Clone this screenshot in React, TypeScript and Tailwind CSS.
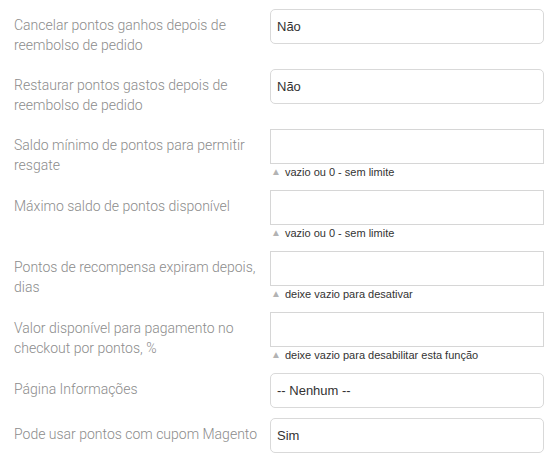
import React from 'react';

interface Field {
  label: string;
  kind: 'select' | 'input';
  value?: string;
  note?: string;
}

const fields: Field[] = [
  { label: 'Cancelar pontos ganhos depois de reembolso de pedido', kind: 'select', value: 'Não' },
  { label: 'Restaurar pontos gastos depois de reembolso de pedido', kind: 'select', value: 'Não' },
  { label: 'Saldo mínimo de pontos para permitir resgate', kind: 'input', note: 'vazio ou 0 - sem limite' },
  { label: 'Máximo saldo de pontos disponível', kind: 'input', note: 'vazio ou 0 - sem limite' },
  { label: 'Pontos de recompensa expiram depois, dias', kind: 'input', note: 'deixe vazio para desativar' },
  { label: 'Valor disponível para pagamento no checkout por pontos, %', kind: 'input', note: 'deixe vazio para desabilitar esta função' },
  { label: 'Página Informações', kind: 'select', value: '-- Nenhum --' },
  { label: 'Pode usar pontos com cupom Magento', kind: 'select', value: 'Sim' },
];

function FieldRow({ field }: { field: Field }) {
  return (
    <div className="flex mb-[10px]">
      {/* Label */}
      <div className="w-[256px] shrink-0 pt-[6px] pb-[4px] pr-[2px] text-[14px] leading-[20px] font-light text-[#8c8c8c] font-['Roboto',sans-serif]">
        {field.label}
      </div>

      {/* Control */}
      <div className="w-[274px] shrink-0">
        {field.kind === 'select' ? (
          <select
            defaultValue={field.value}
            className="block w-full h-[35px] appearance-none rounded-[5px] border border-[#d9d9d9] bg-white pl-[6px] text-[13px] text-[#333] font-['Liberation_Sans',Arial,sans-serif] outline-none"
          >
            <option>{field.value}</option>
          </select>
        ) : (
          <>
            <input
              type="text"
              className="block w-full h-[35px] border border-[#d6d6d6] bg-white px-[6px] text-[13px] outline-none"
            />
            <div className="flex items-center h-[16px] pl-[1px] text-[11px] text-[#333] font-['Liberation_Sans',Arial,sans-serif]">
              <span className="text-[10px] text-[#b3b3b3] mr-[4px] leading-none">▲</span>
              {field.note}
            </div>
          </>
        )}
      </div>
    </div>
  );
}

export default function App() {
  return (
    <div className="w-[556px] h-[463px] bg-white pt-[9px] pl-[14px] overflow-hidden">
      {fields.map((f, i) => (
        <FieldRow key={i} field={f} />
      ))}
    </div>
  );
}
